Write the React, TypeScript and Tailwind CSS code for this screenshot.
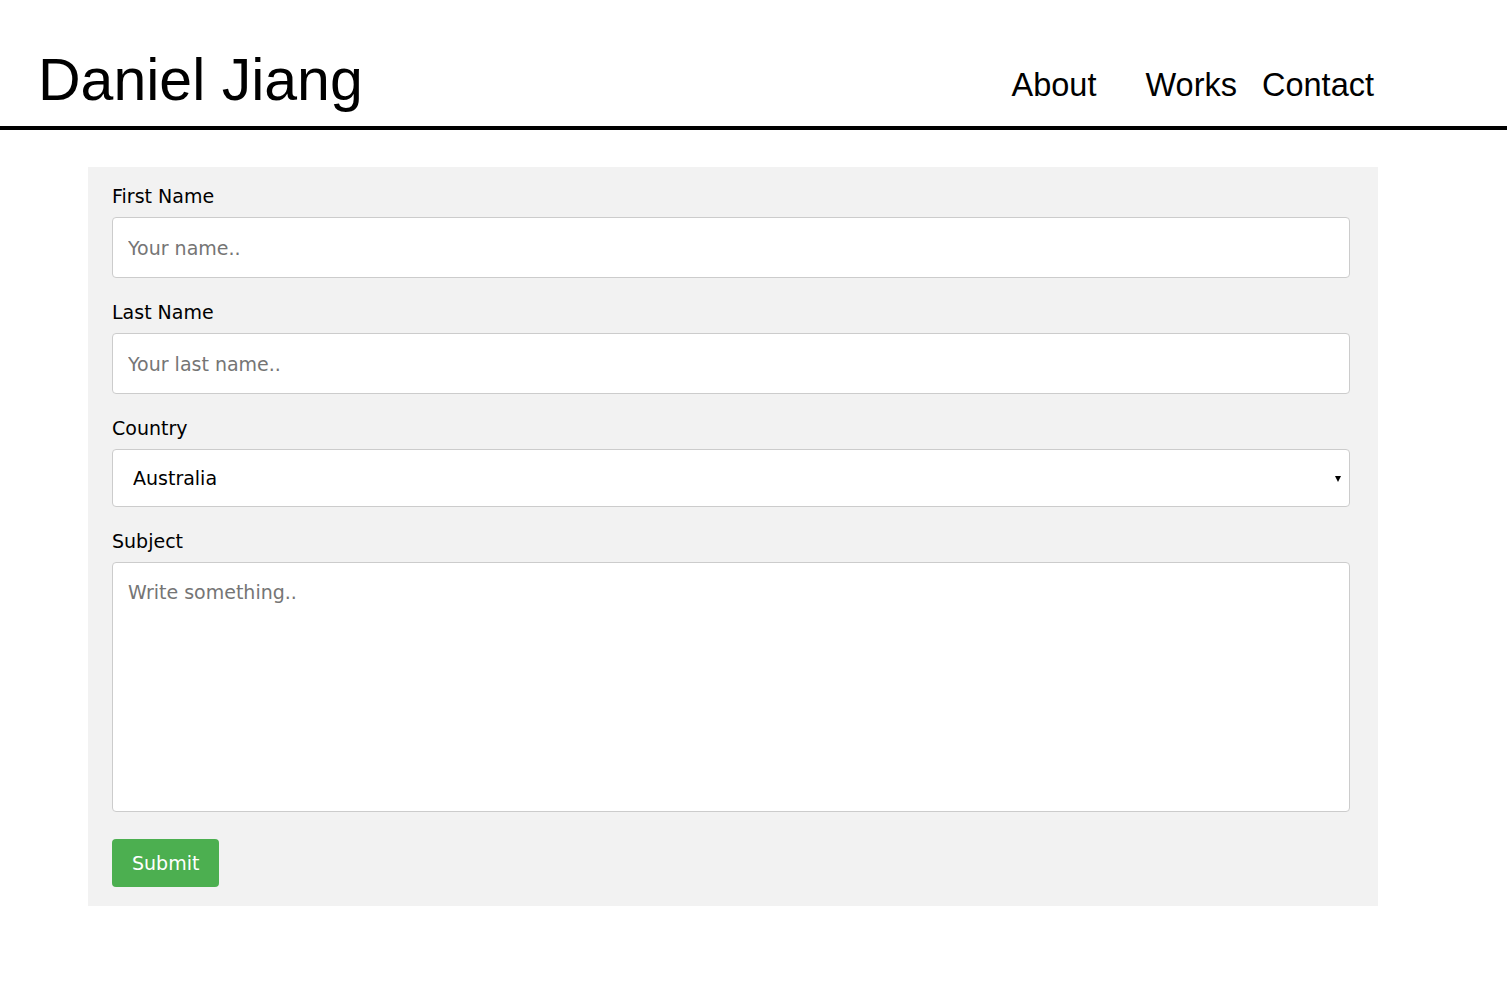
import React from "react";

const fieldClass =
  "block w-full rounded-[4px] border border-[#ccc] bg-white text-[19px] text-black outline-none placeholder:text-[#757575]";

function Label({ text }: { text: string }) {
  return (
    <label className="block text-[19px] leading-[22px] text-black">
      {text}
    </label>
  );
}

export default function App() {
  return (
    <div className="min-h-[1003px] bg-white">
      <header className="flex items-start justify-between border-b-4 border-black h-[130px]">
        <h1 className="ml-[38px] mt-[46px] text-[59px] leading-[68px] font-normal text-black font-['Liberation_Sans',Arial,sans-serif]">
          Daniel Jiang
        </h1>
        <nav className="mr-[133px] mt-[67px] flex text-[32.5px] leading-[37px] text-black font-['Liberation_Sans',Arial,sans-serif]">
          <a href="#about">About</a>
          <a href="#works" className="ml-[49px]">
            Works
          </a>
          <a href="#contact" className="ml-[25px]">
            Contact
          </a>
        </nav>
      </header>

      <form
        className="ml-[88px] mt-[37px] w-[1290px] bg-[#f2f2f2] pl-[24px] pr-[28px] pt-[18px] pb-[19px] font-['DejaVu_Sans',Verdana,sans-serif]"
        onSubmit={(e) => e.preventDefault()}
      >
        <Label text="First Name" />
        <input
          type="text"
          placeholder="Your name.."
          className={`${fieldClass} mt-[10px] h-[61px] px-[15px]`}
        />

        <div className="mt-[23px]">
          <Label text="Last Name" />
        </div>
        <input
          type="text"
          placeholder="Your last name.."
          className={`${fieldClass} mt-[10px] h-[61px] px-[15px]`}
        />

        <div className="mt-[23px]">
          <Label text="Country" />
        </div>
        <div className="relative mt-[10px]">
          <select
            defaultValue="australia"
            className={`${fieldClass} h-[58px] appearance-none pl-[20px] pr-[30px]`}
          >
            <option value="australia">Australia</option>
            <option value="canada">Canada</option>
            <option value="usa">USA</option>
          </select>
          <span className="pointer-events-none absolute right-[9px] top-[27px] h-0 w-0 border-x-[3.5px] border-t-[6px] border-x-transparent border-t-black" />
        </div>

        <div className="mt-[23px]">
          <Label text="Subject" />
        </div>
        <textarea
          placeholder="Write something.."
          className={`${fieldClass} mt-[10px] h-[250px] resize-none px-[15px] pt-[18px] leading-[22px]`}
        />

        <button
          type="submit"
          className="mt-[27px] h-[48px] rounded-[4px] bg-[#4caf50] px-[20px] text-[19px] text-white"
        >
          Submit
        </button>
      </form>
    </div>
  );
}
